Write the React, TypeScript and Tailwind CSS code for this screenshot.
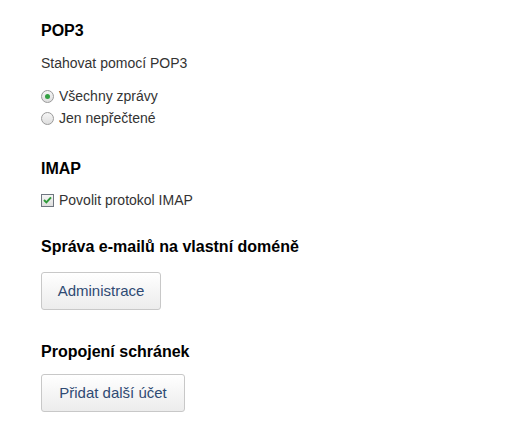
export default function App() {
  return (
    <div className="min-h-screen bg-white px-[41px] pt-[21px] text-[#333] font-['Liberation_Sans',Arial,sans-serif]">
      {/* POP3 */}
      <h2 className="text-[16px] font-bold leading-[20px] text-black">POP3</h2>
      <p className="mt-[13px] text-[14px] leading-[18px]">Stahovat pomocí POP3</p>
      <div className="mt-[15px] flex flex-col gap-[4px]">
        <label className="flex items-center gap-[5px] text-[14px] leading-[18px]">
          <span className="flex h-[13px] w-[13px] items-center justify-center rounded-full border border-[#9a9a9a] bg-gradient-to-b from-[#f6f6f6] to-[#dedede]">
            <span className="h-[5px] w-[5px] rounded-full bg-[#34a043]" />
          </span>
          Všechny zprávy
        </label>
        <label className="flex items-center gap-[5px] text-[14px] leading-[18px]">
          <span className="h-[13px] w-[13px] rounded-full border border-[#9a9a9a] bg-gradient-to-b from-[#f6f6f6] to-[#dedede]" />
          Jen nepřečtené
        </label>
      </div>

      {/* IMAP */}
      <h2 className="mt-[32px] text-[16px] font-bold leading-[20px] text-black">IMAP</h2>
      <label className="mt-[12px] flex items-center gap-[5px] text-[14px] leading-[18px]">
        <span className="flex h-[13px] w-[13px] items-center justify-center border border-[#6f7680] bg-gradient-to-b from-[#f6f6f6] to-[#dedede]">
          <svg width="9" height="8" viewBox="0 0 9 8" fill="none">
            <path d="M1 4L3.4 6.4L8 1.4" stroke="#2f9a3a" strokeWidth="2" />
          </svg>
        </span>
        Povolit protokol IMAP
      </label>

      {/* Domain */}
      <h2 className="mt-[28px] text-[16px] font-bold leading-[20px] text-black">Správa e-mailů na vlastní doméně</h2>
      <button className="mt-[15px] block h-[38px] w-[120px] rounded-[3px] border border-[#c8c8c8] bg-gradient-to-b from-white to-[#ececec] text-[15px] text-[#2f4a73]">
        Administrace
      </button>

      {/* Linked boxes */}
      <h2 className="mt-[32px] text-[16px] font-bold leading-[20px] text-black">Propojení schránek</h2>
      <button className="mt-[12px] block h-[38px] w-[144px] rounded-[3px] border border-[#c8c8c8] bg-gradient-to-b from-white to-[#ececec] text-[15px] text-[#2f4a73]">
        Přidat další účet
      </button>
    </div>
  )
}
